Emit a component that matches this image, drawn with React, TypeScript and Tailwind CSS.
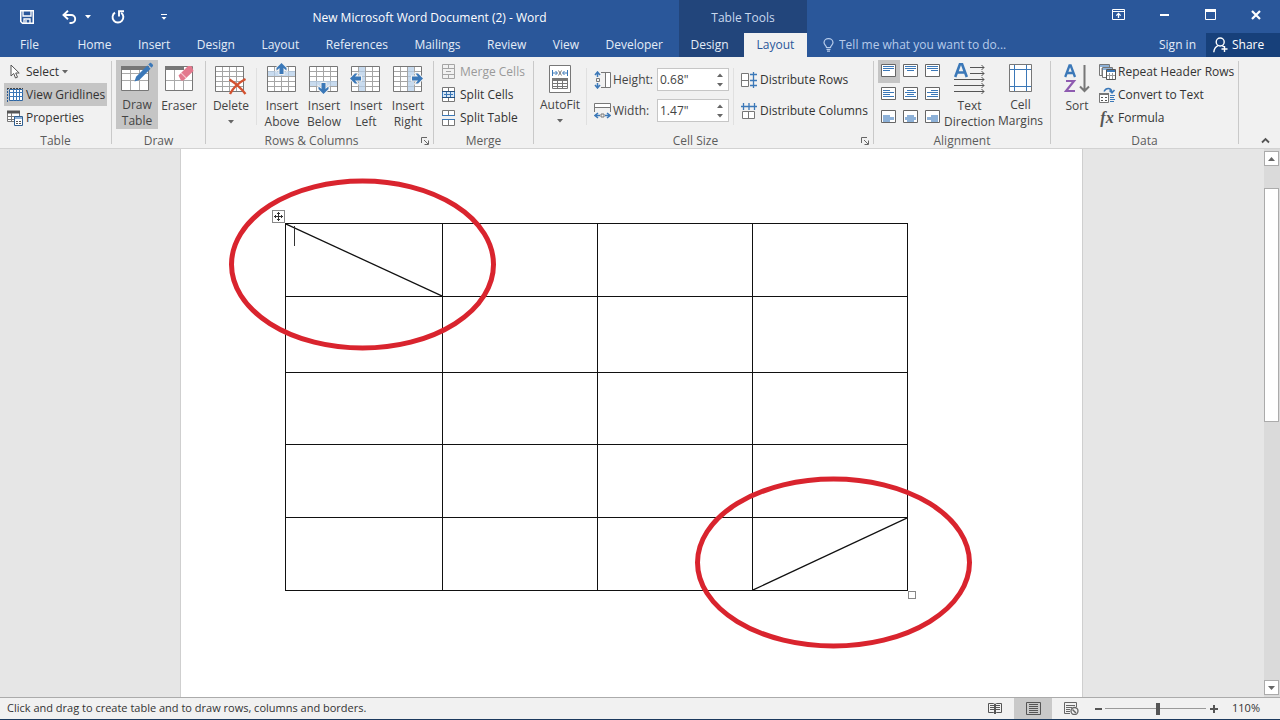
import { ReactNode, useState } from "react";
import { clsx } from "clsx";

interface ChildrenProps {
  children: ReactNode;
}

interface IconProps extends ChildrenProps {
  w: number;
  h: number;
  className?: string;
}

function Icon({ w, h, className, children }: IconProps) {
  return (
    <svg
      width={w}
      height={h}
      viewBox={`0 0 ${w} ${h}`}
      fill="none"
      className={clsx("shrink-0", className)}
      aria-hidden="true"
    >
      {children}
    </svg>
  );
}

function Caret({ className = "fill-[#666]" }: { className?: string }) {
  return (
    <svg width="6" height="4" viewBox="0 0 6 4" className={className} aria-hidden="true">
      <path d="M0 0h6L3 3.500z" />
    </svg>
  );
}

/* ---------- title bar ---------- */

function SaveIcon() {
  return (
    <Icon w={14} h={14}>
      <path d="M.75.75h12.5v12.5H2.5L.75 11.5z" stroke="#fff" strokeWidth="1.5" />
      <path d="M3 1v5h8V1M4 13V9h6v4M6 10v3" stroke="#fff" strokeWidth="1.3" />
    </Icon>
  );
}

function UndoIcon() {
  return (
    <Icon w={15} h={14}>
      <path d="M6 .8 1.5 5 6 9.2M2 5h7.2a4 4 0 0 1 0 8H7.5" stroke="#fff" strokeWidth="1.9" />
    </Icon>
  );
}

function RedoIcon() {
  return (
    <Icon w={14} h={14}>
      <path d="M4 2.6A5.4 5.4 0 1 0 10.2 2.8" stroke="#fff" strokeWidth="1.9" />
      <path d="M8 6.5V1.3h5" stroke="#fff" strokeWidth="1.9" />
    </Icon>
  );
}

function RibbonOptionsIcon() {
  return (
    <Icon w={13} h={11}>
      <path d="M.5.5h12v10H.5zM.5 2.5h12" stroke="#fff" />
      <path d="M6.5 9V4.5M4.3 6.6l2.2-2.2 2.2 2.2" stroke="#fff" strokeWidth="1.3" />
    </Icon>
  );
}

function BulbIcon() {
  return (
    <Icon w={11} h={14}>
      <path
        d="M3.5 9.5C3.5 7.5 1 7 1 4.6A4.3 4.1 0 0 1 5.5.7 4.3 4.1 0 0 1 10 4.6C10 7 7.5 7.5 7.5 9.5zM3.5 11.3h4M4 13.2h3"
        stroke="#b6cbea"
        strokeWidth="1.2"
      />
    </Icon>
  );
}

function ShareIcon() {
  return (
    <Icon w={15} h={16}>
      <circle cx="7.2" cy="5" r="4" stroke="#fff" strokeWidth="1.4" />
      <path d="M.8 15.2c.3-3.3 1.8-5.4 4.2-6.6M9.2 8.6l1.6 1.2M11.5 9v6M8.5 12h6" stroke="#fff" strokeWidth="1.4" />
    </Icon>
  );
}

const TABS = [
  "File",
  "Home",
  "Insert",
  "Design",
  "Layout",
  "References",
  "Mailings",
  "Review",
  "View",
  "Developer",
];

function Header() {
  return (
    <header className="grid grid-cols-[679px_128px_1fr] bg-[#2a579a] text-white">
      <div className="flex flex-col">
        <div className="flex h-[33px] items-center">
          <div className="flex w-[180px] items-center pl-5">
            <button aria-label="Save" className="mr-7">
              <SaveIcon />
            </button>
            <button aria-label="Undo" className="mr-5 flex items-center gap-2">
              <UndoIcon />
              <Caret className="fill-white" />
            </button>
            <button aria-label="Repeat" className="mr-9">
              <RedoIcon />
            </button>
            <button aria-label="Customize Quick Access Toolbar">
              <Icon w={6} h={6}>
                <path d="M0 .5h6" stroke="#fff" />
                <path d="M.5 3h5L3 5.8z" fill="#fff" />
              </Icon>
            </button>
          </div>
          <h1 className="flex-1 pt-0.5 text-center">New Microsoft Word Document (2) - Word</h1>
        </div>
        <nav className="flex h-6 items-center justify-between pr-4 pl-5 text-[#e4ecf7]">
          {TABS.map((tab) => (
            <button key={tab} className={clsx(tab === "File" && "mr-3")}>
              {tab}
            </button>
          ))}
        </nav>
      </div>

      <div className="flex flex-col bg-[#22457b]">
        <div className="flex h-[33px] items-center justify-center pt-0.5 text-[#c9d8ee]">
          Table Tools
        </div>
        <div className="flex h-6">
          <button className="flex-1 pr-1 text-[#e4ecf7]">Design</button>
          <button className="w-[63px] bg-[#f1f1f1] text-[#2a579a]">Layout</button>
        </div>
      </div>

      <div className="flex flex-col">
        <div className="flex h-[33px] justify-end pr-px pb-1">
          <button aria-label="Ribbon Display Options" className="grid w-[46px] place-items-center">
            <RibbonOptionsIcon />
          </button>
          <button aria-label="Minimize" className="grid w-[46px] place-items-center">
            <Icon w={9} h={3}>
              <path d="M0 2h9" stroke="#fff" strokeWidth="2" />
            </Icon>
          </button>
          <button aria-label="Maximize" className="grid w-[46px] place-items-center">
            <Icon w={11} h={11}>
              <path d="M.5 1v9.500h10V1" stroke="#fff" />
              <path d="M0 1.500h11" stroke="#fff" strokeWidth="3" />
            </Icon>
          </button>
          <button aria-label="Close" className="grid w-[46px] place-items-center">
            <Icon w={10} h={10}>
              <path d="m1 1 8 8M9 1 1 9" stroke="#fff" strokeWidth="2.2" />
            </Icon>
          </button>
        </div>
        <div className="flex h-6 items-center">
          <label className="flex flex-1 items-center gap-[5px] pl-4">
            <BulbIcon />
            <input
              type="text"
              aria-label="Tell me what you want to do"
              placeholder="Tell me what you want to do..."
              className="w-full bg-transparent outline-none placeholder:text-[#b6cbea]"
            />
          </label>
          <button className="px-2.5 text-[#e4ecf7]">Sign in</button>
          <button className="flex h-6 w-[74px] items-center gap-1 bg-[#17407a] pl-[7px]">
            <ShareIcon />
            Share
          </button>
        </div>
      </div>
    </header>
  );
}

/* ---------- ribbon icons ---------- */

const GRAY = "#777";
const BLUE = "#3b78b8";

function ViewGridlinesIcon() {
  return (
    <Icon w={16} h={14}>
      <path d="M.5 0v14" stroke="#2a5a92" strokeDasharray="2 1" />
      <path d="M2.500 1.500h13v11h-13z" fill="#fff" stroke="#2f659f" />
      <path d="M2 4.500h14M2 8.500h14M6.500 1v12M9.500 1v12M12.500 1v12" stroke="#3b78b8" />
      <path d="M0 .5h16" stroke="#444" strokeDasharray="2 1" />
    </Icon>
  );
}

function PropertiesIcon() {
  return (
    <Icon w={16} h={16}>
      <path d="M.5 1.500h12v10H.5z" fill="#fff" stroke={GRAY} />
      <path d="M0 2h13" stroke="#555" strokeWidth="3" />
      <path d="M0 6.500h8M0 9.500h8M4.500 3v9" stroke={GRAY} />
      <path d="M7.500 6.500h8v9h-8z" fill="#fff" stroke="#2f5f92" />
      <path d="M8 8h7" stroke="#8fb2d8" strokeWidth="2" />
      <path d="M9 11.500h2M12 11.500h2M9 13.500h2M12 13.500h2" stroke="#555" />
    </Icon>
  );
}

function DrawTableIcon() {
  return (
    <Icon w={32} h={30} className="overflow-visible">
      <path d="M.5 2.500h27v24H.5z" fill="#fff" stroke={GRAY} />
      <path d="M0 4h28" stroke={GRAY} strokeWidth="4" />
      <path d="M1 9.500h26M1 16.500h26M9.500 6v20M18.500 6v20" stroke="#aaa" />
      <path d="m13.500 17.500 1.600-4.800L26.300 1.500l3.300 3.300L18.300 16z" fill={BLUE} />
      <path d="m27.300.5 1.600-1.500c.8-.8 3.900 2.200 3.100 3.100l-1.500 1.600z" fill={BLUE} />
    </Icon>
  );
}

function EraserIcon() {
  return (
    <Icon w={30} h={30}>
      <path d="M1.500 2.500h27v24h-27z" fill="#fff" stroke={GRAY} />
      <path d="M1 4h19" stroke={GRAY} strokeWidth="4" />
      <path d="M2 16.500h26M10.500 6v20M19.500 16v10" stroke="#aaa" />
      <path d="M14.500 11.500 24 2h3.500l2 5-10 9.500H17z" fill="#e3788d" />
      <path d="m17 8.800 5 5" stroke="#f6c3cc" strokeWidth="1.2" />
    </Icon>
  );
}

function GridBase() {
  return (
    <>
      <path d="M.5 3.500h28v25H.5z" fill="#fff" stroke={GRAY} />
      <path
        d="M1 8.500h27M1 13.500h27M1 18.500h27M1 23.500h27M7.500 4v24M14.500 4v24M21.500 4v24"
        stroke="#a5a5a5"
      />
    </>
  );
}

function DeleteIcon() {
  return (
    <Icon w={32} h={32}>
      <GridBase />
      <path d="M14.500 16.500C20 20 26 25 30.500 31M30.500 16C25 19 18 25 15 31" stroke="#d35230" strokeWidth="2.300" />
    </Icon>
  );
}

const INSERT_BANDS = {
  Above: "M1 8h27v5H1z",
  Below: "M1 18h27v5H1z",
  Left: "M8 4h6v24H8z",
  Right: "M15 4h6v24h-6z",
};

/* The arrow is drawn pointing up with its tip on the origin */
const INSERT_TURNS = {
  Above: "translate(14.5 0)",
  Below: "translate(14.5 31) rotate(180)",
  Left: "translate(-1 15.5) rotate(-90)",
  Right: "translate(30 15.5) rotate(90)",
};

function InsertIcon({ side }: { side: keyof typeof INSERT_BANDS }) {
  return (
    <Icon w={30} h={32} className="overflow-visible">
      <GridBase />
      <path d={INSERT_BANDS[side]} fill="#b5cfe9" fillOpacity=".75" />
      <path
        d="M0 0l5 5v2.500L2 5v6h-4V5l-3 2.500V5z"
        transform={INSERT_TURNS[side]}
        fill={BLUE}
        stroke="#f1f1f1"
        strokeWidth="2"
        paintOrder="stroke"
      />
    </Icon>
  );
}

function MergeCellsIcon() {
  return (
    <Icon w={14} h={15}>
      <path d="M.5.5h12v14H.5zM0 4.500h13M0 10.500h13M6.500 0v4M6.500 11v4" stroke="#a5a5a5" />
      <path d="M4 7.500h5" stroke="#a5a5a5" />
    </Icon>
  );
}

function SplitCellsIcon() {
  return (
    <Icon w={14} h={15}>
      <path d="M.5.5h12v14H.5z" fill="#fff" stroke={GRAY} />
      <path d="M6.500 0v15" stroke={GRAY} />
      <path d="M0 5h13v5H0z" fill="#d5e5f5" />
      <path d="M0 4.500h13M0 10.500h13" stroke="#234f80" />
      <path d="M.5 5v5M4.500 5v5M8.500 5v5M12.500 5v5M2 7.500h9" stroke={BLUE} />
    </Icon>
  );
}

function SplitTableIcon() {
  return (
    <Icon w={14} h={16}>
      <path d="M.5.5h12v5H.5zM.5 9.500h12v6H.5zM6.500 0v6M6.500 10v6" stroke={GRAY} fill="#fff" />
      <path d="M0 5.500h13M0 9.500h13" stroke={BLUE} />
    </Icon>
  );
}

function AutoFitIcon() {
  return (
    <Icon w={22} h={28}>
      <path d="M.5.5h21v27H.5z" fill="#fff" stroke={GRAY} />
      <path d="M3.500 5v6M18.500 5v6" stroke={BLUE} />
      <path d="M4 8h4M14 8h4M6.500 6 8.500 8l-2 2M15.500 6l-2 2 2 2" stroke={BLUE} />
      <path d="m9.500 5.500 3 5M12.500 5.500l-3 5" stroke={GRAY} />
      <path d="M3.500 13.500h15v10h-15zM3 18.500h16M3 21.500h16M8.500 14v10M13.500 14v10" stroke={GRAY} />
      <path d="M3 14.500h16" stroke={GRAY} strokeWidth="3" />
    </Icon>
  );
}

function HeightIcon() {
  return (
    <Icon w={17} h={18}>
      <path d="M3.500 1v5M3.500 12v5M1 4l2.500-3L6 4M1 14l2.500 3L6 14" stroke={BLUE} strokeWidth="1.500" />
      <path d="M2.500 7.500h3v3h-3z" stroke={GRAY} />
      <path d="M7 1.500h9.500v15H7M11.500 1v16" stroke={GRAY} />
      <path d="M12 2h4v14h-4z" fill="#fff" />
    </Icon>
  );
}

function WidthIcon() {
  return (
    <Icon w={17} h={18}>
      <path d="M.5 10V1.500h16V10M0 5.500h17" stroke={GRAY} />
      <path d="M1 2h15v3H1z" fill="#fff" />
      <path d="M1 13.500h5M11 13.500h5M4 11l-3 2.500L4 16M13 11l3 2.500-3 2.500" stroke={BLUE} strokeWidth="1.500" />
      <path d="M7 12h3v3H7z" stroke={GRAY} />
    </Icon>
  );
}

function DistributeRowsIcon() {
  return (
    <Icon w={17} h={16}>
      <path d="M.5 1.500h7v13h-7zM0 8.500h8" fill="#fff" stroke={GRAY} />
      <path d="M12.500 0v16M9 2.500h7M9 8.500h7M9 13.500h7" stroke={BLUE} strokeWidth="1.300" />
    </Icon>
  );
}

function DistributeColumnsIcon() {
  return (
    <Icon w={17} h={16}>
      <path d="M1.500 8.500h12v7h-12zM7.500 8v8" fill="#fff" stroke={GRAY} />
      <path d="M0 3.500h16M2.500 0v7M8 0v7M13.500 0v7" stroke={BLUE} strokeWidth="1.300" />
    </Icon>
  );
}

/* from/to are the ends of the short lines in each variant */
const ALIGNMENTS = [
  { name: "Left", from: 2, to: 9 },
  { name: "Center", from: 4, to: 11 },
  { name: "Right", from: 6, to: 13 },
];

function AlignIcon({ row, col }: { row: number; col: number }) {
  const { from, to } = ALIGNMENTS[col];
  return (
    <Icon w={15} h={13}>
      <path d="M.5.5h14v12H.5z" fill="#fff" stroke="#666" />
      {row === 0 && (
        <path d={`M2 2.500h11M2 4.500h11M${from} 6.500H${to}`} stroke={BLUE} />
      )}
      {row === 1 && (
        <path d={`M${from} 3.500H${to}M2 5.500h11M${from} 7.500H${to}M2 9.500h11`} stroke={BLUE} />
      )}
      {row === 2 && (
        <path
          d={`M${from} 5H${to}v2H${from}zM2 7h11v3H2zM${from} 10H${to}v2H${from}z`}
          fill="#8db1d8"
        />
      )}
    </Icon>
  );
}

function TextDirectionIcon() {
  return (
    <Icon w={32} h={32}>
      <path d="M1.200 14 6 1h2l4.800 13M3 9.500h8.500" stroke={BLUE} strokeWidth="2.600" />
      <path
        d="M16 4.500h14M16 10.500h14M0 16.500h30M0 22.500h30M0 28.500h30M27.500 2l2.500 2.500L27.500 7M27.500 8l2.500 2.500-2.500 2.500M27.500 14l2.500 2.500-2.500 2.500M27.500 20l2.500 2.500-2.500 2.500M27.500 26l2.500 2.500-2.500 2.500"
        stroke="#555"
      />
    </Icon>
  );
}

function CellMarginsIcon() {
  return (
    <Icon w={24} h={29}>
      <path d="M.5.5h22v27H.5z" fill="#fff" stroke={GRAY} />
      <path d="M5.500 1v26M17.500 1v26M1 5.500h21M1 22.500h21" stroke={BLUE} />
    </Icon>
  );
}

function SortIcon() {
  return (
    <Icon w={26} h={30}>
      <path d="M1.200 13 5.500 1.500h1.200L11 13M2.800 9h6.800" stroke={BLUE} strokeWidth="2.300" />
      <path d="M2 17h8L2 27h9" stroke="#8e5bb0" strokeWidth="2.200" />
      <path d="M20.500 1v26M16 22.500l4.500 4.500 4.500-4.500" stroke={GRAY} strokeWidth="2" />
    </Icon>
  );
}

function RepeatHeaderIcon() {
  return (
    <Icon w={17} h={16}>
      <path d="M.5.500h10v11H.5z" fill="#fff" stroke={GRAY} />
      <path d="M3 4v7" stroke={GRAY} />
      <path d="M1 2h9" stroke="#8fb2d8" strokeWidth="2" />
      <path d="M3.500 3.500h10v10h-10z" fill="#fff" stroke={GRAY} />
      <path d="M4 5h9" stroke="#8fb2d8" strokeWidth="2" />
      <path d="M7.500 5.500h9v10h-9z" fill="#fff" stroke="#555" />
      <path d="M8 7h8" stroke={BLUE} strokeWidth="2" />
      <path d="M10.500 9v6M13.500 9v6M8 11.500h8" stroke="#999" />
    </Icon>
  );
}

function ConvertTextIcon() {
  return (
    <Icon w={17} h={16}>
      <path d="M.5 6.500h9v9h-9z" fill="#fff" stroke={GRAY} />
      <path d="M0 7h10" stroke={GRAY} strokeWidth="2" />
      <path d="M2 10.500h2M6 10.500h2M2 13.500h2M6 13.500h2" stroke="#555" />
      <path d="M5 4.500C7 .5 12 .5 13 5M10.500 3.500 13 6l2.500-3" stroke={BLUE} strokeWidth="1.500" />
      <path d="M11 8.500h5M11 10.500h4M11 12.500h5M11 14.500h4" stroke={BLUE} />
    </Icon>
  );
}

function SelectIcon() {
  return (
    <Icon w={10} h={15}>
      <path d="M1 1v11l2.700-2.500L5.500 14l2-.8-1.800-4.200h3.500z" fill="#fff" stroke="#555" />
    </Icon>
  );
}

/* ---------- ribbon ---------- */

function Divider() {
  return <div className="my-1 w-px shrink-0 bg-[#c9c9c9]" />;
}

function InnerDivider() {
  return <div className="mt-2 mb-1 w-px shrink-0 bg-[#e0e0e0]" />;
}

interface GroupProps extends ChildrenProps {
  label: string;
  className: string;
  launcher?: boolean;
}

function Group({ label, className, launcher, children }: GroupProps) {
  return (
    <section aria-label={label} className={clsx("flex shrink-0 flex-col pt-[3px]", className)}>
      <div className="flex h-[69px]">{children}</div>
      <div className="mt-1 flex items-center leading-[15px] text-[#5c5c5c]">
        <span className={clsx("flex-1 text-center", launcher && "pr-4")}>{label}</span>
        {launcher && (
          <button aria-label={`${label} settings`} className="mr-1 -ml-3">
            <Icon w={8} h={8}>
              <path d="M.5 6V.5H6M3 3l4 4M7.500 3.500v4h-4" stroke="#666" />
            </Icon>
          </button>
        )}
      </div>
    </section>
  );
}

interface BigButtonProps {
  icon: ReactNode;
  lines: string[];
  className: string;
  active?: boolean;
  menu?: boolean;
}

function BigButton({ icon, lines, className, active, menu }: BigButtonProps) {
  return (
    <button
      className={clsx(
        "flex shrink-0 flex-col items-center pt-[3px] leading-4 whitespace-nowrap",
        active && "bg-[#c5c5c5]",
        className
      )}
    >
      <span className="mb-[3px] flex h-8 items-center">{icon}</span>
      {lines.map((line) => (
        <span key={line}>{line}</span>
      ))}
      {menu && (
        <span className="flex h-4 items-center">
          <Caret />
        </span>
      )}
    </button>
  );
}

interface RowButtonProps {
  icon: ReactNode;
  label: string;
  active?: boolean;
  disabled?: boolean;
  menu?: boolean;
  className?: string;
}

function RowButton({ icon, label, active, disabled, menu, className }: RowButtonProps) {
  return (
    <button
      disabled={disabled}
      className={clsx(
        "flex h-[23px] items-center gap-[3px] whitespace-nowrap",
        active && "bg-[#c5c5c5]",
        disabled ? "text-[#9a9a9a]" : "text-[#333]",
        className
      )}
    >
      <span className="flex w-4 justify-center">{icon}</span>
      {label}
      {menu && <Caret />}
    </button>
  );
}

interface SizeFieldProps {
  id: string;
  label: string;
  icon: ReactNode;
  initial: string;
}

function SizeField({ id, label, icon, initial }: SizeFieldProps) {
  const [value, setValue] = useState(initial);

  function step(delta: number) {
    setValue(`${(parseFloat(value) + delta).toFixed(2)}"`);
  }

  return (
    <div className="flex items-center">
      {icon}
      <label htmlFor={id} className="w-[46px] pl-0.5">
        {label}
      </label>
      <div className="flex h-[23px] w-[72px] items-center border border-[#c6c6c6] bg-white">
        <input
          id={id}
          type="text"
          value={value}
          onChange={(e) => setValue(e.target.value)}
          className="w-0 flex-1 bg-transparent pl-0.5 text-[#444] outline-none"
        />
        <div className="flex w-4 flex-col items-center gap-1.5">
          <button aria-label={`Increase ${id}`} onClick={() => step(0.1)}>
            <Caret className="rotate-180 fill-[#666]" />
          </button>
          <button aria-label={`Decrease ${id}`} onClick={() => step(-0.1)}>
            <Caret />
          </button>
        </div>
      </div>
    </div>
  );
}

function Ribbon() {
  return (
    <div className="flex overflow-hidden border-b border-[#d2d2d2] bg-[#f1f1f1] text-[#444]">
      <Group label="Table" className="w-[111px]">
        <div className="flex w-full flex-col pr-1 pl-1">
          <RowButton icon={<SelectIcon />} label="Select" menu className="pl-[3px]" />
          <RowButton icon={<ViewGridlinesIcon />} label="View Gridlines" active className="pl-[3px]" />
          <RowButton icon={<PropertiesIcon />} label="Properties" className="pl-[3px]" />
        </div>
      </Group>
      <Divider />

      <Group label="Draw" className="w-[93px]">
        <BigButton icon={<DrawTableIcon />} lines={["Draw", "Table"]} active className="ml-1 w-[42px]" />
        <BigButton icon={<EraserIcon />} lines={["Eraser"]} className="w-[42px]" />
      </Group>
      <Divider />

      <Group label="Rows & Columns" className="w-[227px]" launcher>
        <BigButton icon={<DeleteIcon />} lines={["Delete"]} menu className="mr-1 ml-1 w-[42px]" />
        <InnerDivider />
        <div className="flex pl-1">
          <BigButton icon={<InsertIcon side="Above" />} lines={["Insert", "Above"]} className="w-[42px]" />
          <BigButton icon={<InsertIcon side="Below" />} lines={["Insert", "Below"]} className="w-[42px]" />
          <BigButton icon={<InsertIcon side="Left" />} lines={["Insert", "Left"]} className="w-[42px]" />
          <BigButton icon={<InsertIcon side="Right" />} lines={["Insert", "Right"]} className="w-[42px]" />
        </div>
      </Group>
      <Divider />

      <Group label="Merge" className="w-[99px]">
        <div className="flex flex-col pl-[7px]">
          <RowButton icon={<MergeCellsIcon />} label="Merge Cells" disabled />
          <RowButton icon={<SplitCellsIcon />} label="Split Cells" />
          <RowButton icon={<SplitTableIcon />} label="Split Table" />
        </div>
      </Group>
      <Divider />

      <Group label="Cell Size" className="w-[339px]" launcher>
        <BigButton icon={<AutoFitIcon />} lines={["AutoFit"]} menu className="mr-1 ml-1 w-11" />
        <InnerDivider />
        <div className="flex flex-col gap-2 pt-2 pl-[7px]">
          <SizeField id="height" label="Height:" icon={<HeightIcon />} initial={'0.68"'} />
          <SizeField id="width" label="Width:" icon={<WidthIcon />} initial={'1.47"'} />
        </div>
        <div className="w-1" />
        <InnerDivider />
        <div className="flex flex-col gap-2 pt-2 pl-[7px]">
          <RowButton icon={<DistributeRowsIcon />} label="Distribute Rows" />
          <RowButton icon={<DistributeColumnsIcon />} label="Distribute Columns" />
        </div>
      </Group>
      <Divider />

      <Group label="Alignment" className="w-44">
        <div className="ml-1 grid grid-cols-[22px_22px_22px] grid-rows-3">
          {["Top", "Center", "Bottom"].map((v, row) =>
            ALIGNMENTS.map(({ name }, col) => (
              <button
                key={v + name}
                aria-label={`Align ${v} ${name}`}
                className={clsx("flex items-start pt-1 pl-[3px]", row + col === 0 && "bg-[#c5c5c5]")}
              >
                <AlignIcon row={row} col={col} />
              </button>
            ))
          )}
        </div>
        <BigButton icon={<TextDirectionIcon />} lines={["Text", "Direction"]} className="w-[51px]" />
        <BigButton icon={<CellMarginsIcon />} lines={["Cell", "Margins"]} className="w-[51px]" />
      </Group>
      <Divider />

      <Group label="Data" className="w-[187px]">
        <BigButton icon={<SortIcon />} lines={["Sort"]} className="ml-1 w-11" />
        <div className="flex flex-col">
          <RowButton icon={<RepeatHeaderIcon />} label="Repeat Header Rows" />
          <RowButton icon={<ConvertTextIcon />} label="Convert to Text" />
          <RowButton
            icon={
              <span className="font-['Liberation_Serif',serif] text-base leading-4 font-bold text-[#555] italic">
                fx
              </span>
            }
            label="Formula"
          />
        </div>
      </Group>
      <Divider />

      <div className="flex flex-1 items-end justify-end pr-2.5 pb-1">
        <button aria-label="Collapse the Ribbon">
          <Icon w={9} h={7}>
            <path d="m1 5.500 3.500-3.500L8 5.500" stroke="#555" strokeWidth="1.800" />
          </Icon>
        </button>
      </div>
    </div>
  );
}

/* ---------- document ---------- */

const ROW_HEIGHTS = ["h-[73px]", "h-[76px]", "h-[72px]", "h-[73px]", "h-[73px]"];

function Diagonal({ up }: { up?: boolean }) {
  return (
    <svg
      className="absolute inset-0 h-full w-full"
      viewBox="0 0 155 72"
      preserveAspectRatio="none"
      aria-hidden="true"
    >
      <path d={up ? "M0 72 155 0" : "M0 0 155 72"} stroke="#111" strokeWidth="1.300" />
    </svg>
  );
}

function DocumentTable() {
  return (
    <div className="relative w-[623px]">
      <table className="w-full table-fixed border-collapse">
        <colgroup>
          <col className="w-[157px]" />
          <col />
          <col />
          <col />
        </colgroup>
        <tbody>
          {ROW_HEIGHTS.map((height, row) => (
            <tr key={row} className={height}>
              {[0, 1, 2, 3].map((col) => (
                <td key={col} className="relative border border-[#111] p-0">
                  {row === 0 && col === 0 && <Diagonal />}
                  {row === 4 && col === 3 && <Diagonal up />}
                </td>
              ))}
            </tr>
          ))}
        </tbody>
      </table>

      {/* text cursor */}
      <div className="absolute top-[3px] left-[9px] h-5 w-px bg-[#333]" />

      <button
        aria-label="Move table"
        className="absolute -top-[13px] -left-[13px] grid h-[13px] w-[13px] place-items-center border border-[#888] bg-white"
      >
        <Icon w={9} h={9}>
          <path
            d="M4.500 0v9M0 4.500h9M3 2l1.500-1.500L6 2M3 7l1.500 1.500L6 7M2 3 .5 4.500 2 6M7 3l1.500 1.500L7 6"
            stroke="#333"
          />
        </Icon>
      </button>
      <div className="absolute -right-2 -bottom-2 h-2 w-2 border border-[#888] bg-white" />

      <svg
        className="pointer-events-none absolute top-0 left-0 overflow-visible"
        width="623"
        height="368"
        viewBox="0 0 623 368"
        fill="none"
        aria-hidden="true"
      >
        <ellipse cx="77.500" cy="41.500" rx="131" ry="83.500" stroke="#d9242e" strokeWidth="5" />
        <ellipse cx="548.500" cy="339.500" rx="136" ry="83.500" stroke="#d9242e" strokeWidth="5" />
      </svg>
    </div>
  );
}

function ScrollBar() {
  return (
    <div className="flex w-4 flex-col bg-[#dadada] pt-0.5 pr-px pb-0.5">
      <button aria-label="Scroll up" className="grid h-[15px] place-items-center border border-[#ababab] bg-white">
        <Icon w={7} h={4}>
          <path d="M0 4h7L3.500 0z" fill="#666" />
        </Icon>
      </button>
      <div className="mt-[22px] h-[234px] border border-[#ababab] bg-white" />
      <div className="flex-1" />
      <button aria-label="Scroll down" className="grid h-[15px] place-items-center border border-[#ababab] bg-white">
        <Icon w={7} h={4}>
          <path d="M0 0h7L3.500 4z" fill="#666" />
        </Icon>
      </button>
    </div>
  );
}

/* ---------- status bar ---------- */

function ReadIcon() {
  return (
    <Icon w={14} h={13}>
      <path d="M.5 1.500h5l1.500 1 1.500-1h5v9h-5L7 12l-1.500-1.500h-5z" stroke="#555" />
      <path d="M7 2v10" stroke="#555" strokeWidth="2" />
      <path d="M2 3.500h4M2 5.500h4M2 7.500h4M8 3.500h4M8 5.500h4M8 7.500h4" stroke="#555" />
    </Icon>
  );
}

function PrintLayoutIcon() {
  return (
    <Icon w={15} h={13}>
      <path d="M.5.500h14v12H.5zM3 2.500h9M3 4.500h9M3 6.500h9M3 8.500h9M3 10.500h9" stroke="#555" />
    </Icon>
  );
}

function WebLayoutIcon() {
  return (
    <Icon w={15} h={13}>
      <path d="M6 11.500H.5V.5h12V5M2 3.500h9M2 5.500h6M2 7.500h4M2 9.500h4" stroke="#666" />
      <circle cx="10.500" cy="9" r="3.500" stroke="#666" strokeWidth="1.300" />
      <path d="M8.500 7.500 12 11" stroke="#666" strokeWidth="1.500" />
    </Icon>
  );
}

function StatusBar() {
  const [zoom, setZoom] = useState(53);

  return (
    <footer className="flex h-[23px] items-center border-t border-b border-t-[#ababab] border-b-[#1c3a5e] bg-[#f1f1f1] text-[#333]">
      <p className="flex-1 pl-[7px] text-[11px]">Click and drag to create table and to draw rows, columns and borders.</p>
      <button aria-label="Read Mode" className="grid h-full w-[38px] place-items-center">
        <ReadIcon />
      </button>
      <button aria-label="Print Layout" className="grid h-full w-[38px] place-items-center bg-[#c9c9c9]">
        <PrintLayoutIcon />
      </button>
      <button aria-label="Web Layout" className="grid h-full w-[38px] place-items-center">
        <WebLayoutIcon />
      </button>
      <button aria-label="Zoom out" className="ml-[5px]">
        <Icon w={8} h={8}>
          <path d="M0 4h7" stroke="#555" strokeWidth="2" />
        </Icon>
      </button>
      <input
        type="range"
        aria-label="Zoom"
        value={zoom}
        onChange={(e) => setZoom(Number(e.target.value))}
        className="mx-0.5 h-3 w-[101px] appearance-none bg-[linear-gradient(#9a9a9a,#9a9a9a)] bg-[length:100%_1px] bg-center bg-no-repeat [&::-webkit-slider-thumb]:h-3 [&::-webkit-slider-thumb]:w-1 [&::-webkit-slider-thumb]:appearance-none [&::-webkit-slider-thumb]:bg-[#555]"
      />
      <button aria-label="Zoom in" className="ml-0.5">
        <Icon w={8} h={8}>
          <path d="M0 4h8M4 0v8" stroke="#555" strokeWidth="2" />
        </Icon>
      </button>
      <span className="w-[62px] pr-5 text-right text-[11px]">110%</span>
    </footer>
  );
}

export default function App() {
  return (
    <div className="flex min-h-screen flex-col font-['Open_Sans','Noto_Sans',sans-serif] text-xs">
      <Header />
      <Ribbon />
      <div className="flex flex-1 bg-[#e6e6e6]">
        <main className="flex flex-1 justify-center pr-px">
          <div className="w-[903px] border-x border-[#cfcfcf] bg-white pt-[74px] pb-[100px] pl-[104px]">
            <DocumentTable />
          </div>
        </main>
        <ScrollBar />
      </div>
      <StatusBar />
    </div>
  );
}
